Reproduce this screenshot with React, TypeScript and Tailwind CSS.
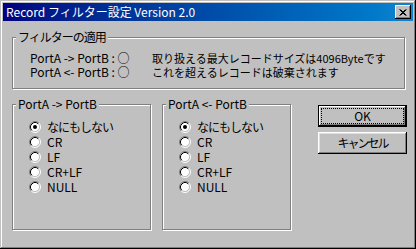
import React from "react";

const font = { fontFamily: '"Noto Sans CJK JP", "Noto Sans", sans-serif' };

function Radio({ checked }: { checked?: boolean }) {
  return (
    <svg width="12" height="12" viewBox="0 0 12 12" className="shrink-0">
      <circle cx="6" cy="6" r="4.5" fill="#fff" />
      <path d="M9.89 2.11 A5.5 5.5 0 0 0 2.11 9.89" stroke="#808080" strokeWidth="1" fill="none" />
      <path d="M2.11 9.89 A5.5 5.5 0 0 0 9.89 2.11" stroke="#fff" strokeWidth="1" fill="none" />
      <path d="M9.18 2.82 A4.5 4.5 0 0 0 2.82 9.18" stroke="#000" strokeWidth="1" fill="none" />
      <path d="M2.82 9.18 A4.5 4.5 0 0 0 9.18 2.82" stroke="#c0c0c0" strokeWidth="1" fill="none" />
      {checked && <circle cx="6" cy="6" r="2" fill="#000" />}
    </svg>
  );
}

function Group({
  label,
  className,
  labelClass,
  children,
}: {
  label: string;
  className: string;
  labelClass?: string;
  children: React.ReactNode;
}) {
  return (
    <div
      className={
        "relative border border-[#808080] shadow-[1px_1px_0_#fff,inset_1px_1px_0_#fff] " +
        className
      }
    >
      <span
        className={
          "absolute left-[3px] top-[-8px] whitespace-nowrap bg-[#c0c0c0] px-[2px] text-[12px] leading-[14px] text-black " +
          (labelClass ?? "")
        }
      >
        {label}
      </span>
      {children}
    </div>
  );
}

function RadioList() {
  const items = ["なにもしない", "CR", "LF", "CR+LF", "NULL"];
  return (
    <div className="flex flex-col">
      {items.map((t, i) => (
        <div key={t} className="flex h-[15px] items-center gap-[6px] text-[12px] leading-[15px] text-black">
          <Radio checked={i === 0} />
          <span className={i === 0 ? "whitespace-nowrap tracking-[-1px]" : "whitespace-nowrap"}>{t}</span>
        </div>
      ))}
    </div>
  );
}

export default function App() {
  return (
    <div
      style={font}
      className="h-[249px] w-[416px] bg-[#c0c0c0] p-[3px] shadow-[inset_-1px_-1px_0_#000,inset_1px_1px_0_#c0c0c0,inset_-2px_-2px_0_#808080,inset_2px_2px_0_#fff]"
    >
      <div className="flex h-[18px] items-center justify-between bg-gradient-to-r from-[#000080] to-[#1084d0] pl-[3px] pr-[2px]">
        <span className="whitespace-nowrap text-[12px] leading-[18px] text-white">Record フィルター設定 Version 2.0</span>
        <div className="flex h-[14px] w-[16px] items-center justify-center bg-[#c0c0c0] shadow-[inset_-1px_-1px_0_#000,inset_1px_1px_0_#fff,inset_-2px_-2px_0_#808080]">
          <svg width="8" height="7" viewBox="0 0 8 7">
            <path d="M0.5 0.5 L6.5 6.5 M1.5 0.5 L7.5 6.5 M6.5 0.5 L0.5 6.5 M7.5 0.5 L1.5 6.5" stroke="#000" strokeWidth="1" />
          </svg>
        </div>
      </div>
      <div className="pl-[9px] pt-[16px]">
        <Group label="フィルターの適用" labelClass="tracking-[-1px]" className="h-[52px] w-[393px]">
          <div className="flex pl-[17px] pt-[13px] text-[12px] leading-[14px] text-black">
            <div className="flex w-[122px] flex-col whitespace-nowrap">
              <span>PortA -&gt; PortB : ○</span>
              <span>PortA &lt;- PortB : ○</span>
            </div>
            <div className="flex flex-col whitespace-nowrap text-[11px]">
              <span>取り扱える最大レコードサイズは4096Byteです</span>
              <span>これを超えるレコードは破棄されます</span>
            </div>
          </div>
        </Group>
        <div className="mt-[15px] flex items-start">
          <Group label="PortA -> PortB" className="h-[126px] w-[139px]">
            <div className="pl-[16px] pt-[14px]">
              <RadioList />
            </div>
          </Group>
          <Group label="PortA <- PortB" className="ml-[11px] h-[126px] w-[129px]">
            <div className="pl-[16px] pt-[14px]">
              <RadioList />
            </div>
          </Group>
          <div className="ml-[27px] mt-[1px] flex flex-col gap-[5px]">
            <button className="flex h-[22px] w-[89px] items-center justify-center border border-black bg-[#c0c0c0] p-[2px] text-[12px] text-black shadow-[inset_-1px_-1px_0_#000,inset_1px_1px_0_#fff,inset_-2px_-2px_0_#808080]">
              <span className="flex h-full w-full items-center justify-center border border-dotted border-black leading-[14px]">
                OK
              </span>
            </button>
            <button className="flex h-[22px] w-[89px] items-center justify-center bg-[#c0c0c0] text-[12px] leading-[14px] text-black shadow-[inset_-1px_-1px_0_#000,inset_1px_1px_0_#fff,inset_-2px_-2px_0_#808080,inset_2px_2px_0_#dfdfdf]">
              <span className="whitespace-nowrap tracking-[-2px]">キャンセル</span>
            </button>
          </div>
        </div>
      </div>
    </div>
  );
}
